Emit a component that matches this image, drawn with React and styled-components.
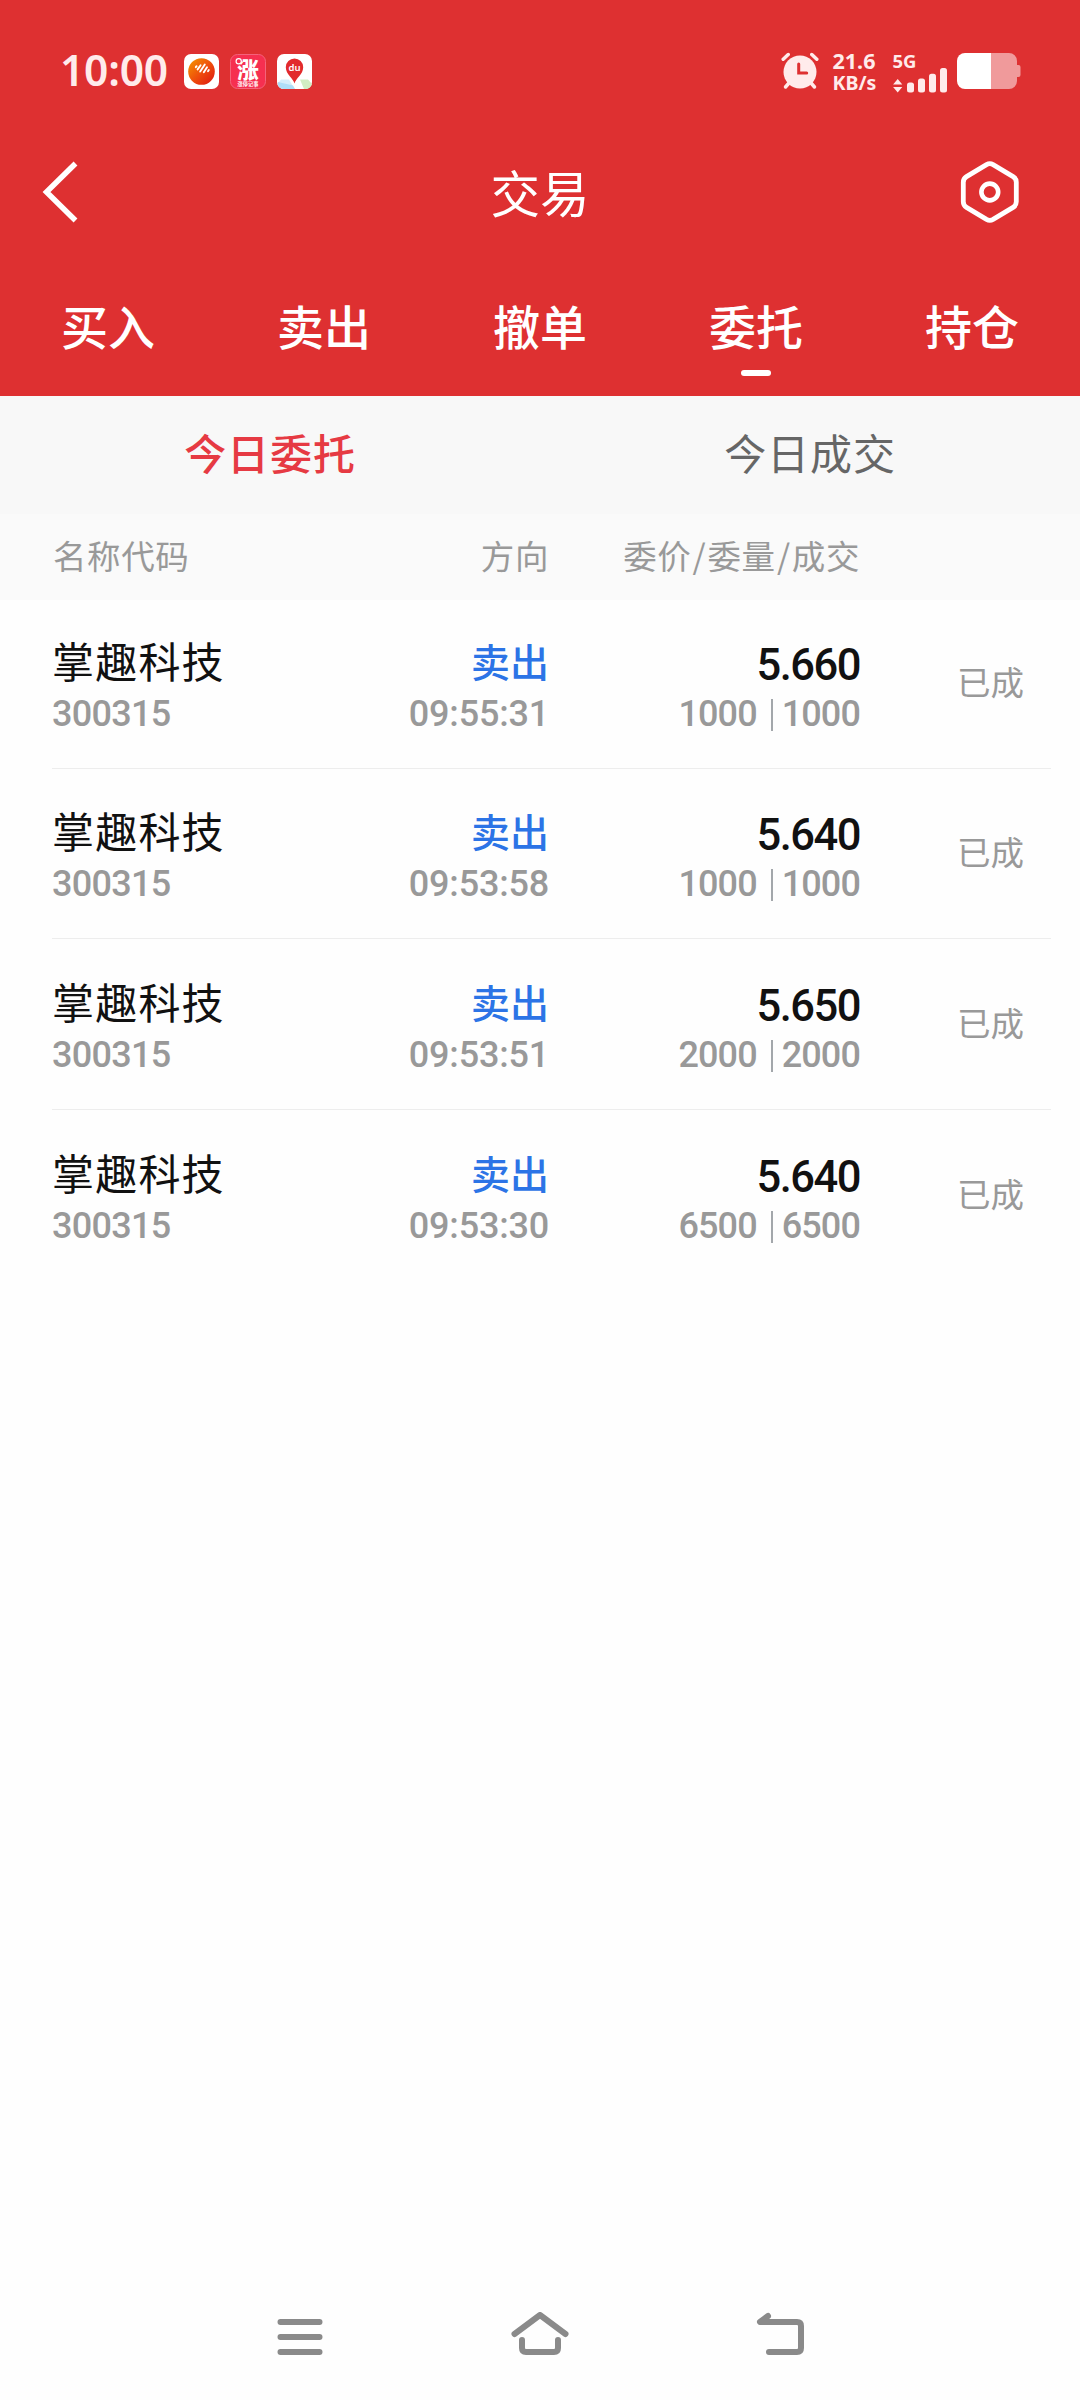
import React from 'react'
import styled, { createGlobalStyle } from 'styled-components'

const GlobalStyle = createGlobalStyle`
  * {
    box-sizing: border-box;
  }
  body {
    margin: 0;
    background-color: #fff;
    font-family: 'Noto Sans CJK SC', 'Noto Sans', sans-serif;
  }
`

const Screen = styled.div`
  width: 1080px;
  height: 2400px;
  display: flex;
  flex-direction: column;
  background-color: #fefefe;
  overflow: hidden;
`

const Header = styled.header`
  height: 396px;
  background-color: #de3031;
  color: #fff;
`

const StatusBar = styled.div`
  height: 140px;
  padding: 0 59.5px 0 60px;
  display: flex;
  justify-content: space-between;
  color: #ffebeb;
  font-family: 'Noto Sans', sans-serif;
`

const StatusGroup = styled.div`
  display: flex;
  height: 142px;
  align-items: center;
  > * {
    flex-shrink: 0;
  }
`

const Clock = styled.span`
  width: 124px;
  padding-bottom: 2px;
  font-size: 42.5px;
  line-height: 60px;
  font-weight: 600;
  letter-spacing: -0.2px;
`

const AppIcons = styled.div`
  display: flex;
  gap: 11px;
  svg {
    display: block;
    overflow: visible;
  }
`

const Speed = styled.div`
  width: 60px;
  padding: 1px 0 0 14px;
  font-weight: 700;
  font-size: 21.5px;
  line-height: 22px;
  white-space: nowrap;
  span {
    display: block;
    font-size: 19.5px;
  }
`

const Signal = styled.div`
  width: 78px;
  padding: 1px 0 0 14px;
  font-size: 18.5px;
  line-height: 22px;
  font-weight: 700;
  svg {
    display: block;
    margin-top: -5px;
  }
`

const TitleBar = styled.div`
  height: 104px;
  padding: 0 59px 0 38px;
  display: grid;
  grid-template-columns: 100px 1fr 79px;
  align-items: center;
  svg {
    display: block;
    justify-self: start;
  }
  svg:last-child {
    justify-self: end;
  }
`

const Title = styled.h1`
  margin: 0;
  font-size: 49.5px;
  line-height: 100px;
  font-weight: 400;
  text-align: center;
`

const Tabs = styled.nav`
  display: grid;
  grid-template-columns: repeat(5, 1fr);
  padding-top: 48px;
`

const Tab = styled.a`
  display: flex;
  flex-direction: column;
  align-items: center;
  font-size: 47px;
  line-height: 66px;
  font-weight: 500;
  &::after {
    content: '';
    width: 30px;
    height: 6px;
    margin-top: 12px;
    border-radius: 3px;
    background-color: ${p => p.$active ? '#fff' : 'transparent'};
  }
`

const SubTabs = styled.div`
  height: 118px;
  display: grid;
  grid-template-columns: 1fr 1fr;
  background-color: #f8f8f8;
`

const SubTab = styled.a`
  text-align: center;
  font-size: 42px;
  line-height: 111px;
  letter-spacing: 0.9px;
  font-weight: ${p => p.$active ? 500 : 400};
  color: ${p => p.$active ? '#e63a43' : '#666'};
`

const columns = '52px 300px 197px 311px 1fr'

const TableHead = styled.div`
  height: 86px;
  display: grid;
  grid-template-columns: ${columns};
  background-color: #fafafa;
  color: #999;
  font-size: 33.5px;
  line-height: 81px;
  letter-spacing: 0.6px;
`

const HeadCell = styled.span`
  grid-column: ${p => p.$col};
  padding-left: ${p => p.$col > 2 ? 0 : '1px'};
  text-align: ${p => p.$col > 2 ? 'right' : 'left'};
`

const Slash = styled.span`
  margin: 0 1.2px;
`

const List = styled.div`
  flex: 1;
`

const Row = styled.div`
  height: 171px;
  padding-bottom: 28px;
  display: grid;
  grid-template-columns: ${columns};
  align-items: end;
  background: ${p => p.$last ? 'none' : 'linear-gradient(#ededed, #ededed) 52px 100% / 999px 1px no-repeat'};
  &:first-child {
    height: 169px;
  }
  &:nth-child(2) {
    height: 170px;
  }
`

const Cell = styled.div`
  grid-column: ${p => p.$col};
  height: 107px;
  text-align: ${p => p.$col > 2 ? 'right' : 'left'};
  white-space: nowrap;
`

const Name = styled.div`
  font-size: 42px;
  line-height: 52px;
  letter-spacing: 1.2px;
  color: #111;
`

const Side = styled.div`
  font-size: 39px;
  line-height: 52px;
  font-weight: 500;
  color: #2c74e6;
`

const Small = styled.div`
  font-family: Roboto, sans-serif;
  font-size: 36px;
  line-height: 56px;
  font-weight: 500;
  color: #999;
  letter-spacing: ${p => p.$spacing || '-0.7px'};
`

const Price = styled.div`
  font-family: Roboto, sans-serif;
  font-size: 43.5px;
  line-height: 63px;
  font-weight: 500;
  letter-spacing: -1.5px;
  color: #111;
`

const Amounts = styled(Small)`
  display: flex;
  justify-content: flex-end;
  align-items: center;
  line-height: 35px;
`

const Bar = styled.i`
  width: 2px;
  height: 32px;
  margin: 0 9px 0 14px;
  background-color: #a3a7ab;
`

const State = styled.div`
  grid-column: 5;
  height: 107px;
  padding-left: 97px;
  font-size: 33.5px;
  line-height: 93px;
  color: #999;
`

const NavBar = styled.footer`
  height: 130px;
  padding: 42px 275px 0 276px;
  display: flex;
  justify-content: space-between;
`

const orders = [
  { time: '09:55:31', price: '5.660', amount: 1000 },
  { time: '09:53:58', price: '5.640', amount: 1000 },
  { time: '09:53:51', price: '5.650', amount: 2000 },
  { time: '09:53:30', price: '5.640', amount: 6500 }
]

const QuoteIcon = () => (
  <svg width='35' height='35' viewBox='0 0 35 35'>
    <defs>
      <linearGradient id='orange' x1='0' y1='0' x2='1' y2='1'>
        <stop offset='0' stopColor='#f59a00' />
        <stop offset='0.55' stopColor='#ee4a0c' />
        <stop offset='1' stopColor='#dc1512' />
      </linearGradient>
    </defs>
    <rect width='35' height='35' rx='7' fill='#fff' />
    <circle cx='17.5' cy='17.5' r='13.3' fill='url(#orange)' />
    <path d='M11.8 13.2l.8-1M13.6 15.4l3-4.2M16.2 17.6l4.6-7M19.8 18.2l3.2-5M24 17.2l.8-1.2' stroke='#fff' strokeWidth='1.9' strokeLinecap='round' fill='none' />
  </svg>
)

const RiseIcon = () => (
  <svg width='36' height='35' viewBox='0 0 36 35' fontFamily='Noto Sans CJK SC, sans-serif' fill='#fff'>
    <rect x='0.5' y='0.5' width='35' height='34' rx='7' fill='#f62f50' stroke='#f5627b' />
    <text x='18' y='23.5' fontSize='21.5' fontWeight='900' textAnchor='middle'>涨</text>
    <circle cx='8.7' cy='7.3' r='2.6' fill='#f62f50' stroke='#fff' strokeWidth='1.2' />
    <text x='18' y='32' fontSize='5.2' fontWeight='700' textAnchor='middle'>涨停记事</text>
  </svg>
)

const MapIcon = () => (
  <svg width='35' height='35' viewBox='0 0 35 35'>
    <rect width='35' height='35' rx='7' fill='#fff' />
    <path d='M4 25.5h8l5.5 9.5H7a7 7 0 0 1-6.5-5z' fill='#d5edfb' />
    <path d='M23 25.5h8l4 4.5a7 7 0 0 1-7 5h-1z' fill='#d2edc4' />
    <path d='M1 28l15 3.5 2 3.5H7a7 7 0 0 1-6-4z' fill='#aeddf8' />
    <path d='M17.5 29.5c-1-5-8.7-9-8.7-16.3a8.7 8.7 0 0 1 17.4 0c0 7.3-7.7 11.3-8.7 16.3z' fill='#e22a2c' />
    <text x='17.5' y='16.5' fontSize='9.5' fontWeight='600' fontFamily='Noto Sans, sans-serif' textAnchor='middle' fill='#fff'>du</text>
  </svg>
)

const AlarmIcon = () => (
  <svg width='38' height='38' viewBox='0 0 38 38' fill='none' stroke='currentColor' strokeLinecap='round'>
    <path d='M2.2 7.2l5-4.7M35.8 7.2l-5-4.7' strokeWidth='3.5' />
    <path d='M8 31l-3.5 4M30 31l3.5 4' strokeWidth='3.5' />
    <circle cx='19' cy='20' r='16.5' fill='currentColor' stroke='none' />
    <path d='M17.7 12v9h8' stroke='#de3031' strokeWidth='3' />
  </svg>
)

const SignalBars = () => (
  <svg width='56' height='26' viewBox='0 0 56 26' fill='currentColor'>
    <path d='M4.7 12l4.6 5.5h-9.2zM4.7 25.5l4.6-5.5h-9.2z' />
    <rect x='14' y='15.5' width='7' height='10' rx='2.5' />
    <rect x='25' y='11.5' width='7' height='14' rx='2.5' />
    <rect x='36' y='6.8' width='7' height='18.7' rx='2.5' />
    <rect x='47' y='1' width='7' height='24.5' rx='2.5' />
  </svg>
)

const Battery = () => (
  <svg width='64' height='36' viewBox='0 0 64 36'>
    <path d='M34 0h18a8 8 0 0 1 8 8v4h1.5q2 0 2 2v8q0 2-2 2h-1.5v4a8 8 0 0 1-8 8h-18z' fill='#f09a9b' />
    <path d='M34 0v36h-26a8 8 0 0 1-8-8v-20a8 8 0 0 1 8-8z' fill='#fff' />
  </svg>
)

const App = () => (
  <Screen>
    <GlobalStyle />
    <Header>
      <StatusBar>
        <StatusGroup>
          <Clock>10:00</Clock>
          <AppIcons>
            <QuoteIcon />
            <RiseIcon />
            <MapIcon />
          </AppIcons>
        </StatusGroup>
        <StatusGroup>
          <AlarmIcon />
          <Speed>21.6<span>KB/s</span></Speed>
          <Signal>
            5G
            <SignalBars />
          </Signal>
          <Battery />
        </StatusGroup>
      </StatusBar>
      <TitleBar>
        <svg width='40' height='64' viewBox='0 0 40 64' fill='none' stroke='#fff' strokeWidth='5.5'>
          <path d='M37.500 3.500L8.500 32l29 28.500' />
        </svg>
        <Title>交易</Title>
        <svg width='62' height='64' viewBox='0 0 62 64' fill='none' stroke='#fff'>
          <path d='M27.5 4.6q3.3-1.8 6.6 0l20 12q3.2 2 3.2 5.6v19.6q0 3.6-3.2 5.6l-20 12q-3.3 1.8-6.6 0l-20-12q-3.2-2-3.2-5.6v-19.6q0-3.6 3.2-5.6z' strokeWidth='4.8' />
          <circle cx='30.8' cy='32' r='8.4' strokeWidth='4.6' />
        </svg>
      </TitleBar>
      <Tabs>
        <Tab>买入</Tab>
        <Tab>卖出</Tab>
        <Tab>撤单</Tab>
        <Tab $active>委托</Tab>
        <Tab>持仓</Tab>
      </Tabs>
    </Header>
    <SubTabs>
      <SubTab $active>今日委托</SubTab>
      <SubTab>今日成交</SubTab>
    </SubTabs>
    <TableHead>
      <HeadCell $col={2}>名称代码</HeadCell>
      <HeadCell $col={3}>方向</HeadCell>
      <HeadCell $col={4}>委价<Slash>/</Slash>委量<Slash>/</Slash>成交</HeadCell>
    </TableHead>
    <List>
      {orders.map((order, i) => (
        <Row key={order.time} $last={i === orders.length - 1}>
          <Cell $col={2}>
            <Name>掌趣科技</Name>
            <Small>300315</Small>
          </Cell>
          <Cell $col={3}>
            <Side>卖出</Side>
            <Small $spacing='-0.2px'>{order.time}</Small>
          </Cell>
          <Cell $col={4}>
            <Price>{order.price}</Price>
            <Amounts $spacing='-0.9px'>
              {order.amount}
              <Bar />
              {order.amount}
            </Amounts>
          </Cell>
          <State>已成</State>
        </Row>
      ))}
    </List>
    <NavBar>
      <svg width='48' height='48' viewBox='0 0 48 48' stroke='#8a8a8a' strokeWidth='6' strokeLinecap='round'>
        <path d='M4.5 10h39M4.5 25h39M4.5 40h39' />
      </svg>
      <svg width='60' height='48' viewBox='0 0 60 48' fill='none' stroke='#8a8a8a' strokeWidth='6' strokeLinecap='round' strokeLinejoin='round'>
        <path d='M4.5 22L30 3l25.5 19' />
        <path d='M12 28v8q0 4 4 4h28q4 0 4-4v-8' />
      </svg>
      <svg width='49' height='48' viewBox='0 0 49 48' fill='none' stroke='#8a8a8a' strokeWidth='6' strokeLinecap='round' strokeLinejoin='round'>
        <path d='M12 4L4 10h37q4 0 4 4v22q0 4-4 4H13' />
      </svg>
    </NavBar>
  </Screen>
)

export default App
